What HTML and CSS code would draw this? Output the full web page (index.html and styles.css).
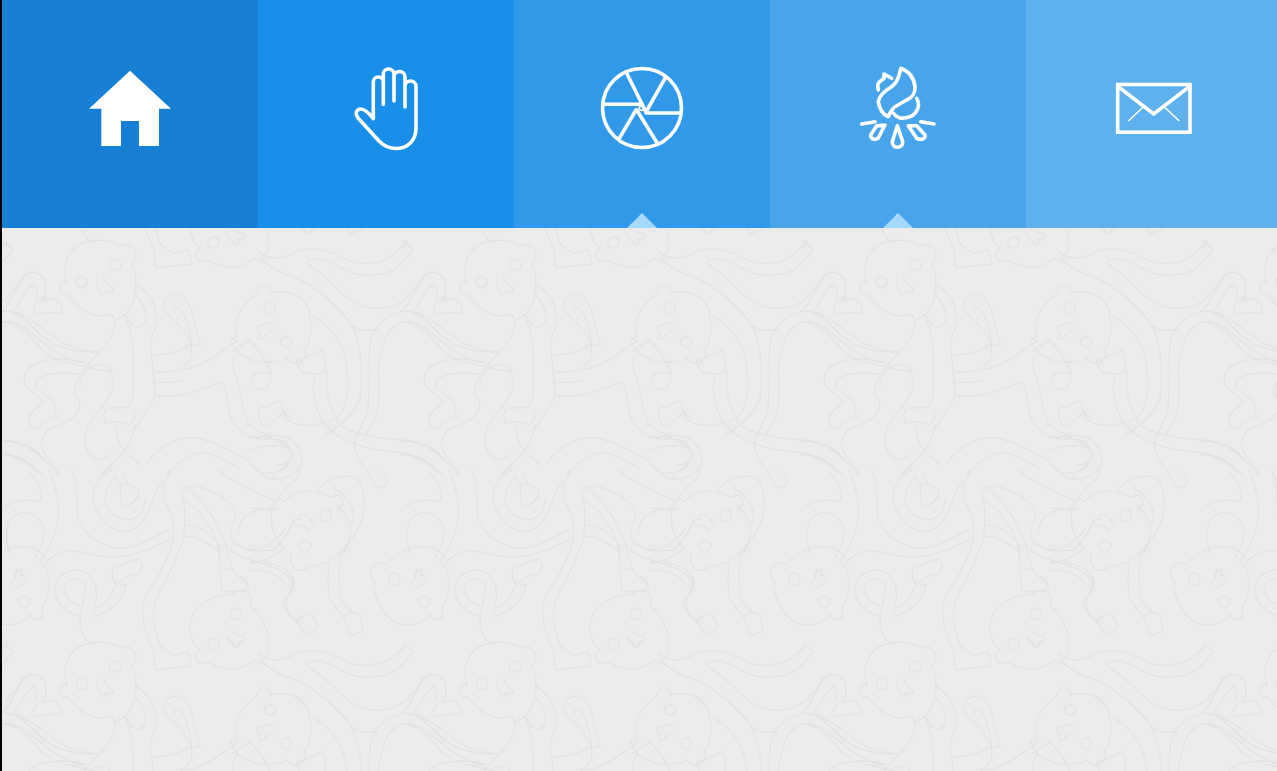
FILE: index.html
```html
<!DOCTYPE html>
<html>
<head>
    <title>Home</title>
    <link rel="stylesheet" href="styles.css">
</head>
<body>
    <div class="page">
        <nav class="tabs">
            <a class="tab tab-home">
                <svg class="tab-icon" viewBox="0 0 100 100"><path class="solid" d="M50 12.7 91 50.7H79V88H59V63H41V88H21.3V50.7H9Z"/></svg>
            </a>
            <a class="tab tab-hand">
                <svg class="tab-icon" viewBox="0 0 100 100"><path class="line" d="M37.3 60.5V24a5 5 0 0 1 10 0V46.5M47.3 24V16.3a5.3 5.3 0 0 1 10.7 0V43M58 19a5.5 5.5 0 0 1 11 0V49M69 28.5a5.5 5.5 0 0 1 11 0V70C80 82 72 90.5 60 90.5 52 90.5 47 87 43 83L22.5 60.5C18 55 21 51 25 51 28 51 31 53 37.3 60.5"/></svg>
            </a>
            <a class="tab tab-shutter open">
                <svg class="tab-icon" viewBox="0 0 100 100">
                    <circle class="line" cx="50" cy="50" r="39.5"/>
                    <circle class="line thin" cx="49.7" cy="50" r="2.4"/>
                    <path class="line" d="M34.7 15.3 53 52M73 20.3 54 54M88 55H54M64.7 84.3 44.7 52M27.3 80.3 44 52M11.3 46.3H48"/>
                </svg>
            </a>
            <a class="tab tab-fire open">
                <svg class="tab-icon" viewBox="0 0 100 100">
                    <path class="line" d="M52.7 10.3C60 13 66 19 67 29 67.5 36 63 40 58.7 42 52 46 47 48 45.3 50.3 43 53 41 56 40.3 58.7 35 57 31 50 30.3 43.7 31 38 35 35 38.7 32 44 29 50 26 52.7 10.3ZM68.7 40.3C70 43 71 46 70.3 48.7 69 54 66 57 62 58.7 58 60 53 60.5 50.3 59.3 48 58.5 46.5 57 45.3 55.3M30.3 32C29.5 29 29.5 27 30.3 25.3 32 23 34 22 36 20.3L36 16 43.7 20.3M13.7 66 27 63.7M72.7 63.7 86 66"/>
                    <path class="line" d="M37 67 28.7 67.7 22.7 77C22.5 79 24 81 26 81.3 28 81.5 29 81 30 80.3ZM49.3 67.7 44.3 83.7C44 87 46.5 89.3 49.3 89.3 52.5 89.3 55 87 54.7 83.7ZM60.3 67.7 68.7 67.7 77 77C77.5 79 76 81 73.7 81.3 71.5 81.5 70 81 68.7 80.3Z"/>
                </svg>
            </a>
            <a class="tab tab-mail">
                <svg class="tab-icon" viewBox="0 0 100 100">
                    <rect class="line" x="13.7" y="26.5" width="72.3" height="47.7"/>
                    <path class="line" d="M14.3 28.7 49.7 56 85.3 28.7"/>
                    <path class="line hair" d="M40.3 48 24.3 63M59.3 48 75.3 63"/>
                </svg>
            </a>
        </nav>

        <svg class="backdrop">
            <defs>
                <g id="head">
                    <path d="M40 108C10 118-25 115-60 85-75 72-85 60-92 50-105 52-118 45-116 30-114 15-100 8-92 14-110-20-100-70-65-95-30-118 35-120 72-95 78-105 98-100 108-85 118-70 112-50 98-45 118-15 118 45 100 80 95 90 90 100 83 108L50 128 40 108"/>
                    <circle cx="-50" cy="12" r="17"/>
                    <circle cx="50" cy="-40" r="17"/>
                    <path d="M15-5C17 8 25 18 43 30 48 40 40 48 23 38 25 50 8 55 3 40 1 28-6 18-5 5"/>
                </g>
                <g id="tile">
                    <use href="#head" x="295" y="150"/>
                    <use href="#head" transform="translate(820 290) rotate(92)"/>
                    <use href="#head" transform="translate(680 1216) rotate(-26)"/>
                    <use href="#head" transform="translate(1240 1081) rotate(-115)"/>
                    <use href="#head" transform="translate(940 896) rotate(151)"/>

                    <!-- upper left of the tile -->
                    <path d="M0 250C60 245 90 290 120 320 160 355 220 375 295 372"/>
                    <path d="M0 283C60 280 90 325 130 370 160 395 210 405 250 415 285 425 320 430 335 430"/>
                    <path d="M10 245C40 215 55 165 70 145 90 125 130 130 138 170 140 190 135 205 130 215"/>
                    <path d="M40 250C60 225 85 170 100 170 112 175 112 195 108 212"/>
                    <path d="M130 214 108 225C102 235 100 250 102 258L185 252C192 245 185 232 170 218L160 210 135 216"/>
                    <path d="M255 403C210 390 150 390 110 405 80 420 65 445 75 470 90 490 115 505 132 520"/>
                    <path d="M240 440C210 435 170 430 130 445 105 455 100 470 115 485 130 500 145 505 155 515"/>
                    <path d="M130 520 85 565C85 585 95 600 105 605L165 560C170 540 165 525 155 515"/>
                    <path d="M345 278C345 310 340 325 300 370 260 410 225 450 225 490 228 510 245 520 238 540 225 575 190 590 150 600 125 620 118 650 130 670 145 695 165 715 178 740"/>
                    <path d="M375 262C390 300 400 330 400 420V500C395 525 385 535 380 540"/>
                    <path d="M300 410C265 412 240 445 240 470M300 410C325 405 338 430 340 470 335 510 300 540 280 570 250 610 245 640 270 680 285 700 300 700 330 680"/>
                    <path d="M315 545C340 535 380 540 400 540 408 560 402 580 390 590 375 590 360 580 345 580L320 585C310 575 310 560 315 545Z"/>
                    <path d="M350 590C345 620 355 650 375 670L420 710M405 590C402 625 385 660 345 700L300 745"/>
                    <path d="M465 500C455 535 420 580 405 600"/>
                    <path d="M405 165C440 190 470 225 470 275 468 310 450 325 450 345 452 380 465 440 465 500"/>
                    <path d="M398 195C425 215 440 250 438 275 435 295 410 305 395 290L380 265"/>
                    <path d="M460 382C500 380 540 370 572 352"/>
                    <path d="M470 430C510 435 550 430 570 395 582 370 575 335 545 300 525 275 490 255 490 235 490 210 515 195 535 198 560 205 575 240 580 275 590 310 595 330 600 350L575 352"/>
                    <path d="M522 248C525 235 540 235 550 255 565 285 572 320 575 350"/>
                    <path d="M555 422C610 415 660 375 715 335"/>
                    <path d="M465 462C495 465 525 465 548 455"/>
                    <path d="M468 503C530 510 590 495 660 462 680 470 680 500 685 540 692 590 730 630 790 635 835 625 870 640 880 680 875 700 850 715 830 710"/>
                    <path d="M715 370C695 385 695 420 710 450 722 490 725 540 745 590 790 620 845 640 870 660"/>
                    <path d="M697 370 750 335C770 360 790 385 803 408L812 435"/>
                    <path d="M770 435 812 435C815 450 810 470 795 485 775 490 750 465 755 450 760 440 765 438 770 435Z"/>
                    <path d="M0 640C50 635 100 655 125 685 145 705 165 730 175 745M0 680C50 680 85 705 110 730"/>
                    <path d="M440 705C470 670 510 632 570 628 620 628 680 660 730 690M500 745C530 705 570 668 620 675 650 680 680 700 715 720"/>

                    <!-- lower left of the tile -->
                    <g transform="translate(0 726)">
                        <path d="M135 280C170 240 215 235 260 250 310 265 380 265 440 240 470 228 495 215 512 208"/>
                        <path d="M30 250C15 210 15 170 40 140 70 115 115 130 130 170 135 210 120 245 105 262"/>
                        <path d="M5 120C30 95 70 85 115 95 130 90 125 60 110 35L85 0"/>
                        <path d="M145 0C175 60 185 130 165 190 155 220 140 250 120 265"/>
                        <path d="M215 0C230 30 232 80 232 130 240 180 280 220 350 235 410 238 460 200 510 175"/>
                        <path d="M335 0C300 15 278 50 280 90 285 130 320 180 370 185 420 185 445 140 470 60L486 30"/>
                        <path d="M345 15C330 35 310 65 315 100 325 135 360 150 395 148 425 140 432 120 435 90"/>
                        <path d="M345 15 360 45 385 40 370 12"/>
                        <path d="M362 45C360 60 358 85 372 110 395 105 415 85 418 65L385 40"/>
                        <path d="M510 0C490 30 485 60 495 95 515 130 525 165 520 200 510 270 470 320 440 375 420 415 425 470 460 540"/>
                        <path d="M545 60C555 110 558 160 550 200 535 270 490 340 465 395 455 440 465 490 482 530"/>
                        <path d="M460 540C465 560 460 585 468 598 500 600 535 590 570 590 575 575 570 555 565 548 550 545 535 555 525 555 510 550 495 540 482 530"/>
                        <path d="M545 55C590 35 650 65 690 100 715 125 708 150 695 170 690 190 690 220 715 225 745 245 780 245 820 240 850 220 870 175 880 150"/>
                        <path d="M715 190C715 160 730 125 790 118 810 115 825 115 835 115"/>
                        <path d="M540 85C590 110 640 165 655 230 660 260 660 280 660 300"/>
                        <path d="M555 50C610 90 665 170 680 235 688 265 692 280 695 295"/>
                        <path d="M555 165C600 165 635 195 660 230M555 200C590 195 630 220 660 250"/>
                        <path d="M660 300 695 295M660 300C660 330 665 350 665 362 690 368 720 365 745 358 745 335 735 325 715 320L695 295"/>
                        <path d="M690 240C725 270 790 275 850 305 885 325 890 355 860 385 850 410 870 440 890 458"/>
                        <path d="M650 0C710 40 770 70 830 95"/>
                        <path d="M345 340C340 370 320 405 280 415M378 345C370 390 330 430 280 440"/>
                        <path d="M345 340 378 345"/>
                        <path d="M345 340C335 325 335 310 338 295 360 290 390 265 420 270 432 285 425 305 410 312 390 315 375 320 360 335"/>
                        <path d="M245 440C195 430 160 395 165 350 175 315 205 295 240 300 275 305 290 340 290 385"/>
                        <path d="M245 410C215 400 190 380 195 350 205 325 240 315 255 345 262 370 240 415 240 450 240 480 255 505 272 525"/>
                        <path d="M285 345C292 370 288 400 282 418"/>
                    </g>

                    <!-- upper right of the tile -->
                    <g transform="translate(750 0)">
                        <path d="M25 70C50 95 90 95 130 75 180 50 230 65 280 90 330 115 385 110 425 85 445 70 460 55 470 40"/>
                        <path d="M460 40 485 60"/>
                        <path d="M170 100C190 85 230 95 265 115 310 145 360 150 420 130 450 115 475 85 490 60"/>
                        <path d="M170 105C195 125 235 150 265 185 300 220 335 245 395 240 450 240 490 195 520 150 540 125 575 130 585 160 590 185 585 205 582 215"/>
                        <path d="M30 90C60 120 105 140 150 155 215 190 280 250 310 300 335 370 340 440 330 510 315 555 280 590 225 620"/>
                        <path d="M190 265C240 290 285 345 290 420 298 480 295 525 270 560 235 590 175 600 130 585 110 575 105 565 100 552"/>
                        <path d="M100 552 120 568"/>
                        <path d="M95 560C80 570 50 600 42 595 25 580 20 545 30 540 55 540 75 520 88 520 95 525 100 540 100 552"/>
                        <path d="M195 440C185 480 190 540 225 590 260 630 310 650 380 665 450 675 520 670 580 745"/>
                        <path d="M232 430C225 480 235 540 270 590 305 615 370 630 450 635 510 640 550 660 575 690"/>
                        <path d="M195 440 232 430"/>
                        <path d="M192 438C175 430 165 440 160 435 145 420 135 400 142 395 165 395 195 375 218 365 228 385 225 410 225 430"/>
                        <path d="M305 295C335 308 360 310 385 305"/>
                        <path d="M360 350C355 400 365 480 350 560 335 600 305 640 315 670 325 695 340 715 350 725"/>
                        <path d="M360 350C365 310 395 260 460 250 530 245 580 310 640 345 680 365 710 370 740 370"/>
                        <path d="M385 420C395 360 400 300 460 282 510 275 550 320 600 360 640 390 670 400 700 405"/>
                        <path d="M385 420C385 470 390 520 380 560 365 590 345 620 340 640"/>
                        <path d="M0 630C40 625 90 615 125 635 155 660 170 700 140 730 110 755 60 765 30 735 0 715 0 700-10 690"/>
                        <path d="M0 668C30 655 90 645 115 660 135 685 115 720 80 732 50 740 25 730 10 712"/>
                    </g>

                    <!-- lower right of the tile -->
                    <g transform="translate(750 726)">
                        <path d="M0 115C30 115 60 118 80 120"/>
                        <path d="M85 90C90 60 130 40 140 25 145 15 148 5 150 0"/>
                        <path d="M0 240C35 240 65 225 105 180M0 275C45 280 80 255 105 230"/>
                        <path d="M0 280C50 270 110 285 130 325 140 360 105 380 100 400 100 425 125 445 140 455"/>
                        <path d="M0 300C50 300 90 310 110 350"/>
                        <path d="M140 455 165 432"/>
                        <path d="M140 452C150 470 160 490 170 495 190 490 205 470 200 460 190 445 195 440 185 435 175 435 170 430 165 432"/>
                        <path d="M240 270C232 320 232 360 240 385 255 415 270 430 280 440M270 270C265 320 270 370 272 385 285 405 295 420 305 425"/>
                        <path d="M280 440 305 425"/>
                        <path d="M280 440C290 460 295 490 300 497 315 490 340 490 338 478 335 460 335 440 328 432 315 430 310 428 305 425"/>
                        <path d="M205 60C225 30 270 15 310 20 345 40 350 100 335 150 315 200 280 240 270 270"/>
                        <path d="M250 55C275 65 305 100 310 130 310 150 305 165 303 170"/>
                        <path d="M350 0C370 30 375 40 380 55 395 50 410 50 412 35 405 15 400 5 395 0"/>
                    </g>
                </g>
                <pattern id="monkeys" x="-2" width="400" height="402" patternUnits="userSpaceOnUse">
                    <g class="tile-lines" transform="scale(.33333)">
                        <use href="#tile"/>
                        <use href="#tile" x="-1200"/>
                        <use href="#tile" y="-1206"/>
                        <use href="#tile" x="-1200" y="-1206"/>
                    </g>
                </pattern>
            </defs>
            <rect width="100%" height="100%" fill="url(#monkeys)"/>
        </svg>
    </div>
</body>
</html>
```

FILE: styles.css
```css
html, body {
    height: 100%;
}

body {
    margin: 0;
    background: #000;
    overflow: hidden;
}

.page {
    margin-left: 2px;
    height: 100%;
    display: flex;
    flex-direction: column;
    overflow: hidden;
    background: #ebebeb;
}

.tabs {
    display: flex;
    flex: 0 0 228px;
}

.tab {
    flex: 0 0 256px;
    position: relative;
    display: flex;
    align-items: center;
    justify-content: center;
}

.tab-home { background: #1780d5; }
.tab-hand { background: #1a8fe9; }
.tab-shutter { background: #3199ea; }
.tab-fire { background: #48a5ec; }
.tab-mail { background: #5fb1ee; }

.tab.open::after {
    content: "";
    position: absolute;
    bottom: 0;
    left: 50%;
    margin-left: -15px;
    border-left: 15px solid transparent;
    border-right: 15px solid transparent;
    border-bottom: 15px solid #a5d8fb;
}

.tab-icon {
    width: 100px;
    height: 100px;
    margin-bottom: 12px;
}

.solid {
    fill: #fff;
}

.line {
    fill: none;
    stroke: #fff;
    stroke-width: 3.6;
    stroke-linecap: round;
    stroke-linejoin: round;
}

.tab-mail .line {
    stroke-linecap: butt;
    stroke-linejoin: miter;
    stroke-width: 3.6;
}

.tab-mail .line.hair {
    stroke-width: 1.5;
}

.line.thin {
    stroke-width: 1.6;
}

.backdrop {
    display: block;
    flex: 1;
    width: 100%;
}

.tile-lines {
    fill: none;
    stroke: #e1e1e1;
    stroke-width: 3.4;
    stroke-linecap: round;
    stroke-linejoin: round;
}
```
